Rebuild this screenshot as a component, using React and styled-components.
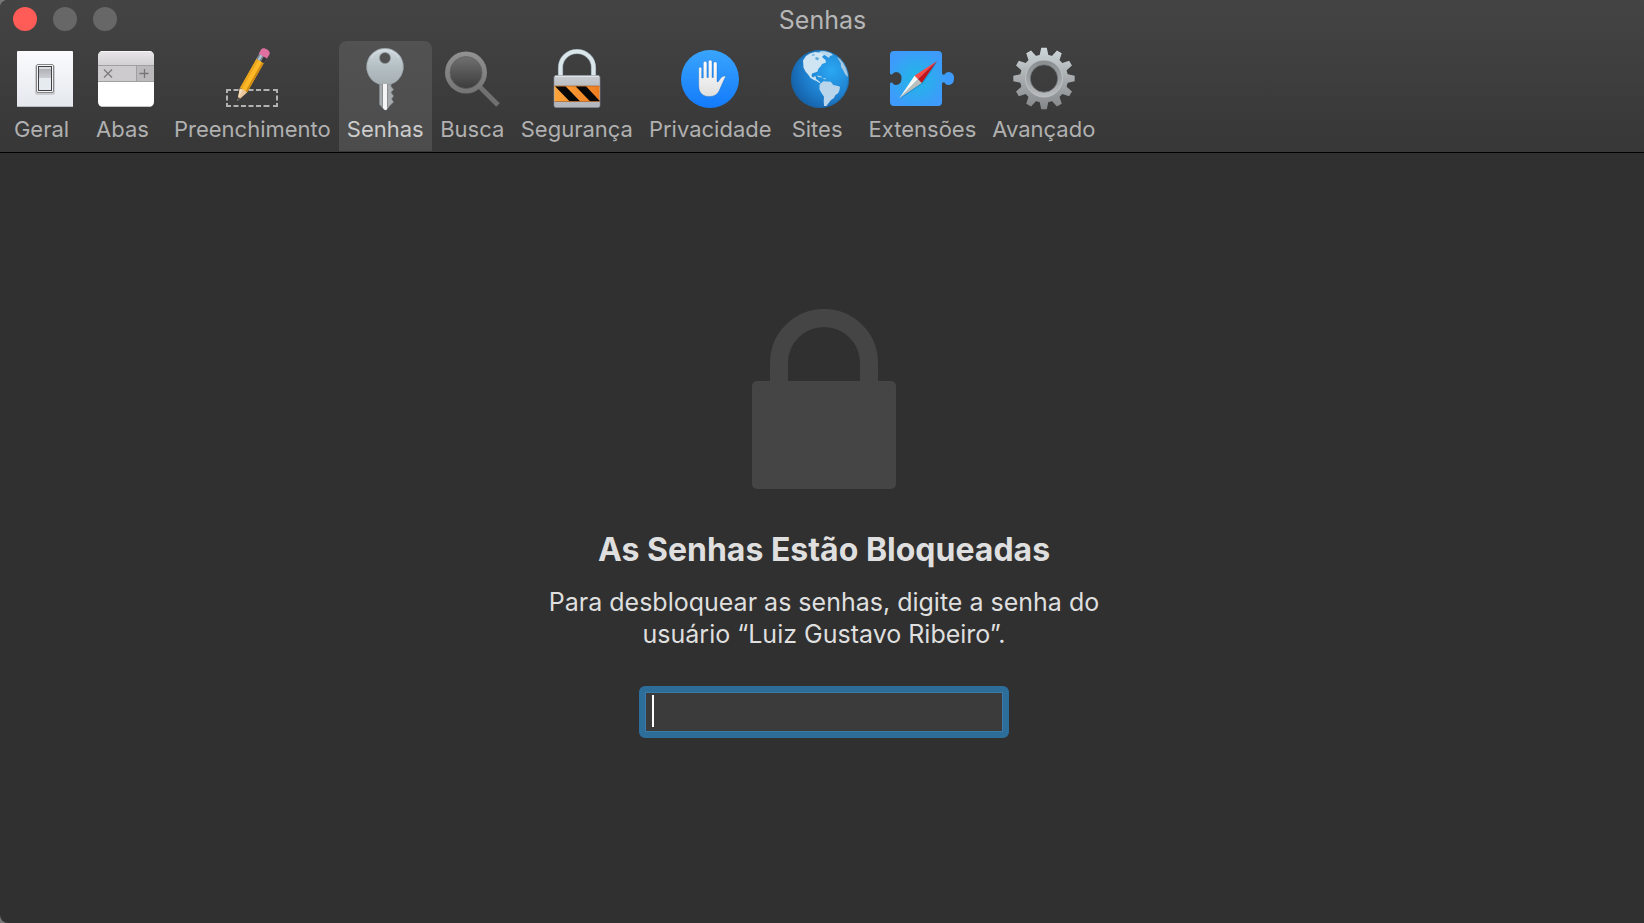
import React, { useState } from "react";
import styled, { createGlobalStyle } from "styled-components";

const gearTeeth = Array.from({ length: 12 }, (_, i) => {
  const a = (i * Math.PI) / 6;
  const point = (r, offset) =>
    `${(32 + r * Math.cos(a + offset)).toFixed(2)} ${(
      31.5 +
      r * Math.sin(a + offset)
    ).toFixed(2)}`;
  return `M${point(21, -0.24)}L${point(30.8, -0.09)}L${point(
    30.8,
    0.09
  )}L${point(21, 0.24)}Z`;
}).join("");

const GeneralIcon = () => (
  <Icon viewBox="0 0 64 64" aria-hidden="true">
    <defs>
      <linearGradient id="plate" x1="0" y1="0" x2="0" y2="1">
        <stop offset="0" stopColor="#fbfbfd" />
        <stop offset="1" stopColor="#e4e8ed" />
      </linearGradient>
      <linearGradient id="lever" x1="0" y1="0" x2="0" y2="1">
        <stop offset="0" stopColor="#aeb0b6" />
        <stop offset="1" stopColor="#ccced3" />
      </linearGradient>
    </defs>
    <rect x="4" y="4" width="56" height="56" rx="1" fill="url(#plate)" />
    <path d="M4.500 59.500h55" stroke="#b9bdc2" />
    <rect x="22" y="18" width="20" height="30" rx="2" fill="#c9ccd1" />
    <rect x="23.500" y="17.500" width="17" height="28" rx="1.500" fill="#f6f6f6" stroke="#858585" />
    <rect x="25.500" y="19.500" width="13" height="24" fill="#e6ebef" stroke="#3e4246" />
    <path d="M26 20h12v2H26z" fill="#dadce0" />
    <path d="M26 22h12v9H26z" fill="url(#lever)" />
  </Icon>
);

const TabsIcon = () => (
  <Icon viewBox="0 0 64 64" aria-hidden="true">
    <defs>
      <linearGradient id="tabsTop" x1="0" y1="0" x2="0" y2="1">
        <stop offset="0" stopColor="#e8e6e8" />
        <stop offset="1" stopColor="#d3d0d3" />
      </linearGradient>
      <clipPath id="tabsClip">
        <rect x="4" y="4" width="56" height="56" rx="5" />
      </clipPath>
    </defs>
    <g clipPath="url(#tabsClip)">
      <path d="M4 4h56v56H4z" fill="#fff" />
      <path d="M4 4h56v14H4z" fill="url(#tabsTop)" />
      <path d="M4 18h38v16H4z" fill="#cdcbcd" />
      <path d="M42 18h18v16H42z" fill="#bbb9bb" />
      <path d="M4 18.500h56M4 34.500h56M42.500 18v16" stroke="#a19fa1" />
      <path d="M4 4.500h56" stroke="#f5f5f5" />
      <path d="M4 59.500h56" stroke="#c4c4c4" />
    </g>
    <path d="M10 22.500l8 8M18 22.500l-8 8" stroke="#7d7b7d" strokeWidth="1.300" />
    <path d="M45.500 26.500h9M50.500 22v9" stroke="#777577" strokeWidth="1.300" />
  </Icon>
);

const AutoFillIcon = () => (
  <Icon viewBox="0 0 64 64" aria-hidden="true">
    <path
      d="M7 46v-3h4M7 56v3h4M57 46v-3h-4M57 56v3h-4M7 48.500v5M57 48.500v5M13.500 43h5M21 43h5M28.500 43h5M36 43h5M43.500 43h6M13.500 59h5M21 59h5M28.500 59h5M36 59h5M43.500 59h6"
      fill="none"
      stroke="#b2b2b2"
      strokeWidth="2"
    />
    <g transform="translate(17.500 54) rotate(29.500)">
      <path d="M0 0L-4.200 -12L0 -13.500L4.200 -12Z" fill="#ecc79c" />
      <path d="M-4.200 -12L0 0L-1 -12Z" fill="#f7ddba" />
      <path d="M0 0L-1.200 -3.500H1.200Z" fill="#4c4c4c" />
      <path d="M-4.200 -12L-4.200 -47H4.200V-12Q2.800 -14 1.500 -12Q0 -14 -1.500 -12Q-3 -14 -4.200 -12Z" fill="#fcb827" />
      <path d="M-4.200 -13V-47H-2V-13Z" fill="#eba51c" />
      <path d="M2.200 -13V-47H4.200V-13Z" fill="#d08c12" />
      <path d="M-4.500 -46H4.500V-52H-4.500Z" fill="#777f8a" />
      <path d="M-3 -46H-.500V-52H-3Z" fill="#a9c0d0" />
      <path d="M1 -46H4.500V-52H1Z" fill="#38343a" />
      <path d="M-4.800 -51.500V-56.500Q-4.500 -59.500 0 -59.500T4.800 -56.500V-51.500Z" fill="#e0709f" />
    </g>
  </Icon>
);

const KeyIcon = () => (
  <Icon viewBox="0 -1 64 64" aria-hidden="true">
    <defs>
      <linearGradient id="keyHead" x1="0" y1="0" x2="0" y2="1">
        <stop offset="0" stopColor="#ced8dc" />
        <stop offset=".5" stopColor="#b5c0c4" />
        <stop offset="1" stopColor="#a6aeb2" />
      </linearGradient>
    </defs>
    <path
      d="M26.500 34v22.500l5 5.500h2l3-4 4-4-2-3 2-3-2.500-3.500 2.500-3-2.500-3V34z"
      fill="#a7abae"
      stroke="#858c90"
      strokeWidth=".6"
    />
    <path
      fillRule="evenodd"
      d="M32 .300a18.500 18.500 0 0 1 6.500 35.800q-6.500 1.500-13 0A18.500 18.500 0 0 1 32 .300zM32 4.500a5.500 5.500 0 1 0 0 11a5.500 5.500 0 1 0 0-11z"
      fill="url(#keyHead)"
      stroke="#8e999e"
      strokeWidth=".6"
    />
    <path d="M18 10A16.500 16.500 0 0 1 46 10" fill="none" stroke="#e2eaed" strokeWidth=".6" />
    <path d="M30 36h4v25l-1 1h-1l-2-2z" fill="#f5f5f6" />
    <path d="M29.500 36v23M34.500 36v23" stroke="#8b8e91" strokeWidth="1" />
  </Icon>
);

const SearchIcon = () => (
  <Icon viewBox="0 0 64 64" aria-hidden="true">
    <defs>
      <linearGradient id="lens" x1="0" y1="0" x2="0" y2="1">
        <stop offset="0" stopColor="#707070" />
        <stop offset="1" stopColor="#3c3c3c" />
      </linearGradient>
      <linearGradient id="lensRing" x1="0" y1="0" x2="0" y2="1">
        <stop offset="0" stopColor="#929292" />
        <stop offset="1" stopColor="#747474" />
      </linearGradient>
    </defs>
    <path d="M38 38L58 58" stroke="#707070" strokeWidth="5" />
    <circle cx="26" cy="25.500" r="21" fill="url(#lensRing)" />
    <circle cx="26" cy="25.500" r="16" fill="url(#lens)" stroke="#606060" strokeWidth=".7" />
  </Icon>
);

const SecurityIcon = () => (
  <Icon viewBox="0 0 64 64" aria-hidden="true">
    <defs>
      <linearGradient id="steel" x1="0" y1="0" x2="0" y2="1">
        <stop offset="0" stopColor="#c9ccd0" />
        <stop offset=".3" stopColor="#bbbfc4" />
        <stop offset="1" stopColor="#b3b6bc" />
      </linearGradient>
      <linearGradient id="hazard">
        <stop offset="0" stopColor="#ffa53b" />
        <stop offset="1" stopColor="#ee7c20" />
      </linearGradient>
    </defs>
    <path d="M15.500 29V20.500a16.500 16 0 0 1 33 0V29" fill="none" stroke="#8496a0" strokeWidth="5.200" />
    <path d="M15.500 29V20.500a16.500 16 0 0 1 33 0V29" fill="none" stroke="#dbe6ea" strokeWidth="4" />
    <rect x="9" y="28.500" width="46" height="32" rx="2" fill="url(#steel)" stroke="#818b99" strokeWidth=".6" />
    <path d="M10 29.300h44" stroke="#e6e9eb" />
    <path d="M9.500 39h45v15.500h-45z" fill="url(#hazard)" />
    <path d="M10 39.300h10.500L35 54.300H24.500zM30.500 39.300H41L55 54.300H45z" fill="#080707" />
    <path d="M9.500 39h45M9.500 54.500h45" stroke="#a8612b" strokeWidth=".7" />
  </Icon>
);

const PrivacyIcon = () => (
  <Icon viewBox="0 0 64 64" aria-hidden="true">
    <defs>
      <linearGradient id="privacy" x1="0" y1="0" x2="0" y2="1">
        <stop offset="0" stopColor="#39a5fd" />
        <stop offset="1" stopColor="#137afb" />
      </linearGradient>
      <linearGradient id="hand" x1="0" y1="0" x2="0" y2="1">
        <stop offset="0" stopColor="#fff" />
        <stop offset="1" stopColor="#dfdfe0" />
      </linearGradient>
    </defs>
    <circle cx="32" cy="32" r="29" fill="url(#privacy)" />
    <path
      d="M20.700 21.500a1.500 1.500 0 0 1 3 0V31h1.600V16a1.800 1.800 0 0 1 3.600 0V30.500h1.500V14.800a1.800 1.800 0 0 1 3.600 0V30.500h1.400V16.500a1.800 1.800 0 0 1 3.600 0V34.500l1 .5 2.800-4q2-2.500 5-2l-3.500 7.500q-1.800 4-3 7-2.600 6-10.100 6-7.500 0-9.800-6-.7-2-.7-6z"
      fill="url(#hand)"
      stroke="#1263bc"
      strokeWidth=".35"
    />
  </Icon>
);

const GlobeIcon = () => (
  <Icon viewBox="0 0 64 64" aria-hidden="true">
    <defs>
      <radialGradient id="ocean" cx=".7" cy=".35" r=".75">
        <stop offset="0" stopColor="#2ba8f3" />
        <stop offset=".6" stopColor="#1e80cf" />
        <stop offset="1" stopColor="#1560a8" />
      </radialGradient>
      <clipPath id="globeClip">
        <circle cx="32" cy="32" r="28.500" />
      </clipPath>
    </defs>
    <circle cx="32" cy="32" r="29" fill="url(#ocean)" />
    <g clipPath="url(#globeClip)">
      <path
        d="M15 13.500L18 9L22 6.500L27 5L31 5.500L35 5L36 8L34 10L37.500 13L38 15.500L34 17L33 19L30.500 21.500L29.500 24.500L27 25.500L24 26.500L23.500 29L25 30.500L27.500 29L28 32L30 33.500L32.500 35.500L31.500 36L28.500 34L26 33L22.500 31L20.500 28L17.500 24.500L15.500 20.500Z"
        fill="#cfe5f3"
      />
      <path d="M28 10l3 1-1 2.500-3-1.500zM24 8l2-1 1 1-3 1z" fill="#5aa9dc" />
      <path d="M31 5l5-2 6 2 3 3-3 1-1 2-3-2zM28.500 28.500l4 .5 2 1.500-4-.5zM34.500 31.500l3-.500v1.500z" fill="#b7d9ef" />
      <path
        d="M31.500 38L33 36L35.500 34.300L39 34.500L42.700 34.700L45.300 38L49 38.800L52 39.700L51.500 43L50.300 46L47 48.500L46 51L43 53L41 55.500L38.500 59L36 59L35.700 54L36 49.700L33.500 46L31.500 42.500Z"
        fill="#b9d5ec"
      />
      <path d="M49 10L52 11L56 15L59 20L60.500 28L59.500 30L57 27L55 23L53 20L52.700 16Z" fill="#a6c9e3" />
    </g>
    <circle cx="32" cy="32" r="28.500" fill="none" stroke="#206296" opacity=".6" />
  </Icon>
);

const ExtensionsIcon = () => (
  <Icon viewBox="0 0 64 64" aria-hidden="true">
    <defs>
      <radialGradient id="puzzle" gradientUnits="userSpaceOnUse" cx="27" cy="32" r="30">
        <stop offset="0" stopColor="#1fb8e5" />
        <stop offset="1" stopColor="#3e9bfb" />
      </radialGradient>
    </defs>
    <path
      d="M4 4H48q4 0 4 4V25.500q0 3 2.500 2 1-2.500 4-2.500 5.500 0 5.500 6.500T58.500 38q-3 0-4-2.500-2.500-1-2.500 2V55q0 4-4 4H4q-4 0-4-4V37q0-2 2-1.500 1.500 2.500 4 2.500 5.500 0 5.500-6.500T6 25q-2.500 0-4 2.500-2 .5-2-1.500V8q0-4 4-4z"
      fill="url(#puzzle)"
    />
    <path d="M47.500 15L33 36.500 10 52z" fill="#1676b4" opacity=".45" />
    <path d="M47 14L24.500 28.800 28 32.300z" fill="#fb4a48" />
    <path d="M47 14L28 32.300 31.700 36z" fill="#c41319" />
    <path d="M9.300 51.300L24.500 28.800 28 32.300z" fill="#f7f7f5" />
    <path d="M9.300 51.300L28 32.300 31.700 36z" fill="#bdbdb9" />
  </Icon>
);

const AdvancedIcon = () => (
  <Icon viewBox="0 0 64 64" aria-hidden="true">
    <defs>
      <linearGradient id="gear" gradientUnits="userSpaceOnUse" x1="0" y1="1" x2="0" y2="62">
        <stop offset="0" stopColor="#ced6da" />
        <stop offset=".5" stopColor="#a8acaf" />
        <stop offset="1" stopColor="#858789" />
      </linearGradient>
      <linearGradient id="gearRing" x1="0" y1="0" x2="0" y2="1">
        <stop offset="0" stopColor="#8a8f92" />
        <stop offset="1" stopColor="#b4b8ba" />
      </linearGradient>
    </defs>
    <path d={gearTeeth} fill="url(#gear)" />
    <circle cx="32" cy="31.500" r="20" fill="none" stroke="url(#gear)" strokeWidth="8" />
    <circle cx="32" cy="31.500" r="16" fill="none" stroke="url(#gearRing)" strokeWidth="5" />
    <circle cx="32" cy="31.500" r="18.500" fill="none" stroke="#c4c9cb" strokeWidth=".8" />
    <circle cx="32" cy="31.500" r="13.800" fill="none" stroke="#6d7173" strokeWidth=".8" />
  </Icon>
);

const tabs = [
  { name: "Geral", icon: GeneralIcon, narrow: true },
  { name: "Abas", icon: TabsIcon, narrow: true },
  { name: "Preenchimento", icon: AutoFillIcon },
  { name: "Senhas", icon: KeyIcon },
  { name: "Busca", icon: SearchIcon },
  { name: "Segurança", icon: SecurityIcon },
  { name: "Privacidade", icon: PrivacyIcon },
  { name: "Sites", icon: GlobeIcon, narrow: true },
  { name: "Extensões", icon: ExtensionsIcon },
  { name: "Avançado", icon: AdvancedIcon },
];

function App() {
  const [active, setActive] = useState("Senhas");
  const [password, setPassword] = useState("");

  return (
    <Window>
      <GlobalStyle />
      <Header>
        <TitleBar>
          <WindowButtons>
            <WindowButton type="button" aria-label="Fechar" $color="#ff5b57" />
            <WindowButton type="button" aria-label="Minimizar" $color="#676767" />
            <WindowButton type="button" aria-label="Ampliar" $color="#676767" />
          </WindowButtons>
          <Title>Senhas</Title>
        </TitleBar>
        <Toolbar>
          {tabs.map(({ name, icon: TabIcon, narrow }) => (
            <ToolbarButton
              key={name}
              type="button"
              aria-pressed={active === name}
              $active={active === name}
              onClick={() => setActive(name)}
            >
              <TabIcon />
              <ToolbarLabel $narrow={narrow}>{name}</ToolbarLabel>
            </ToolbarButton>
          ))}
        </Toolbar>
      </Header>

      <Content>
        <LockImage viewBox="0 0 144 180" aria-hidden="true">
          <path d="M27 72V54a45 45 0 0 1 90 0V72" fill="none" stroke="#454545" strokeWidth="18" />
          <rect y="72" width="144" height="108" rx="5" fill="#454545" />
        </LockImage>
        <Heading>As Senhas Estão Bloqueadas</Heading>
        <Message htmlFor="password">
          Para desbloquear as senhas, digite a senha do usuário “Luiz Gustavo
          Ribeiro”.
        </Message>
        <Field>
          <PasswordInput
            id="password"
            type="password"
            value={password}
            onChange={(e) => setPassword(e.target.value)}
          />
          {!password && <Caret />}
        </Field>
      </Content>
    </Window>
  );
}

const GlobalStyle = createGlobalStyle`
  * {
    box-sizing: border-box;
  }
  body {
    margin: 0;
    background: #777777;
    font-family: Inter, "Liberation Sans", sans-serif;
  }
  button, input {
    font-family: inherit;
  }
`;

const Window = styled.div`
  display: flex;
  flex-direction: column;
  min-height: 100vh;
  background: #303030;
  border-radius: 8px 0 0 8px;
  overflow: hidden;
`;

const Header = styled.header`
  background: linear-gradient(#444444, #373737);
  border-bottom: 1px solid #000000;
`;

const TitleBar = styled.div`
  display: grid;
  grid-template-columns: 1fr auto 1fr;
  align-items: center;
  height: 41px;
  padding: 0 12px 3px 13px;
`;

const WindowButtons = styled.div`
  display: flex;
  gap: 16px;
`;

const WindowButton = styled.button`
  width: 24px;
  height: 24px;
  padding: 0;
  border: none;
  border-radius: 50%;
  background: ${({ $color }) => $color};
`;

const Title = styled.h1`
  margin: 2px 0 0;
  color: #b6b6b6;
  font-size: 25px;
  font-weight: 400;
  line-height: 32px;
`;

const Toolbar = styled.nav`
  display: flex;
  padding: 0 0 1px 4px;
`;

const ToolbarButton = styled.button`
  display: flex;
  flex-direction: column;
  align-items: center;
  min-width: 81px;
  height: 110px;
  padding: 6px 8px 0;
  border: none;
  border-radius: 8px 8px 0 0;
  background: ${({ $active }) =>
    $active ? "linear-gradient(#525252, #4c4c4c)" : "transparent"};
  color: ${({ $active }) => ($active ? "#cccccc" : "#b0b0b0")};
`;

const Icon = styled.svg`
  width: 64px;
  height: 64px;
`;

const ToolbarLabel = styled.span`
  padding-right: ${({ $narrow }) => ($narrow ? "6px" : "0")};
  margin-top: 4px;
  font-size: 22px;
  line-height: 28px;
  white-space: nowrap;
`;

const Content = styled.main`
  display: flex;
  flex: 1;
  flex-direction: column;
  align-items: center;
  padding: 156px 0 64px 4px;
  color: #dfdfdf;
`;

const LockImage = styled.svg`
  width: 144px;
  height: 180px;
`;

const Heading = styled.h2`
  margin: 41px 0 0;
  font-size: 32px;
  font-weight: 700;
  line-height: 40px;
`;

const Message = styled.label`
  max-width: 600px;
  margin-top: 16px;
  font-size: 25px;
  line-height: 32px;
  text-align: center;
`;

const Field = styled.div`
  position: relative;
  width: 370px;
  margin-top: 36px;
`;

const PasswordInput = styled.input`
  display: block;
  width: 100%;
  height: 52px;
  padding: 0 6px;
  border: 6px solid #2c6d99;
  border-radius: 6px;
  background: #3b3b3b;
  box-shadow: inset 0 0 0 1px #3b7ba5;
  color: #ffffff;
  font-size: 25px;
  outline: none;
`;

const Caret = styled.span`
  position: absolute;
  top: 9px;
  left: 13px;
  width: 2px;
  height: 32px;
  background: #ffffff;
  pointer-events: none;
`;

export default App;
